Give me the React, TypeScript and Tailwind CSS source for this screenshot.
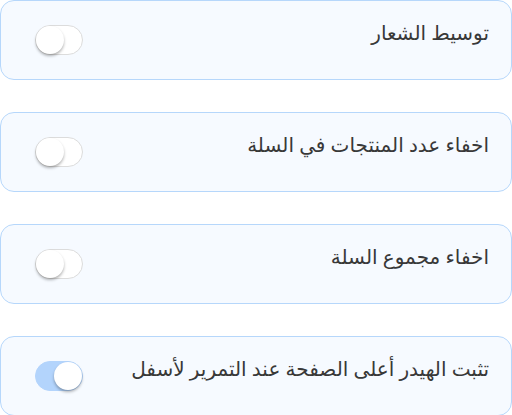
import { useState } from 'react';

const options = [
  { id: 'center-logo', label: 'توسيط الشعار', on: false },
  { id: 'hide-count', label: 'اخفاء عدد المنتجات في السلة', on: false },
  { id: 'hide-total', label: 'اخفاء مجموع السلة', on: false },
  { id: 'sticky-header', label: 'تثبت الهيدر أعلى الصفحة عند التمرير لأسفل', on: true },
];

function Toggle({ checked, onChange }: { checked: boolean; onChange: () => void }) {
  return (
    <button
      type="button"
      onClick={onChange}
      className={`relative w-[48px] h-[30px] rounded-full border shrink-0 ${
        checked ? 'bg-[#b3d4fc] border-[#b3d4fc]' : 'bg-white border-[#dcdcdc]'
      }`}
    >
      <span
        className={`absolute top-[0px] w-[28px] h-[28px] rounded-full bg-white shadow-[0_2px_3px_rgba(0,0,0,0.3)] ${
          checked ? 'left-[18px]' : 'left-[0px]'
        }`}
      />
    </button>
  );
}

export default function App() {
  const [state, setState] = useState(options.map((o) => o.on));

  return (
    <div dir="rtl" className="w-[512px] bg-white flex flex-col gap-[32px] font-['Noto_Sans','DejaVu_Sans',sans-serif]">
      {options.map((o, i) => (
        <div
          key={o.id}
          className="h-[80px] rounded-[14px] border border-[#b6d7fb] bg-[#f6faff] flex justify-between items-start pr-[22px] pl-[34px] pt-[17px]"
        >
          <span className="text-[20px] leading-[30px] text-[#383838]">{o.label}</span>
          <div className="pt-[7px]">
            <Toggle
              checked={state[i]}
              onChange={() => setState((s) => s.map((v, j) => (j === i ? !v : v)))}
            />
          </div>
        </div>
      ))}
    </div>
  );
}
